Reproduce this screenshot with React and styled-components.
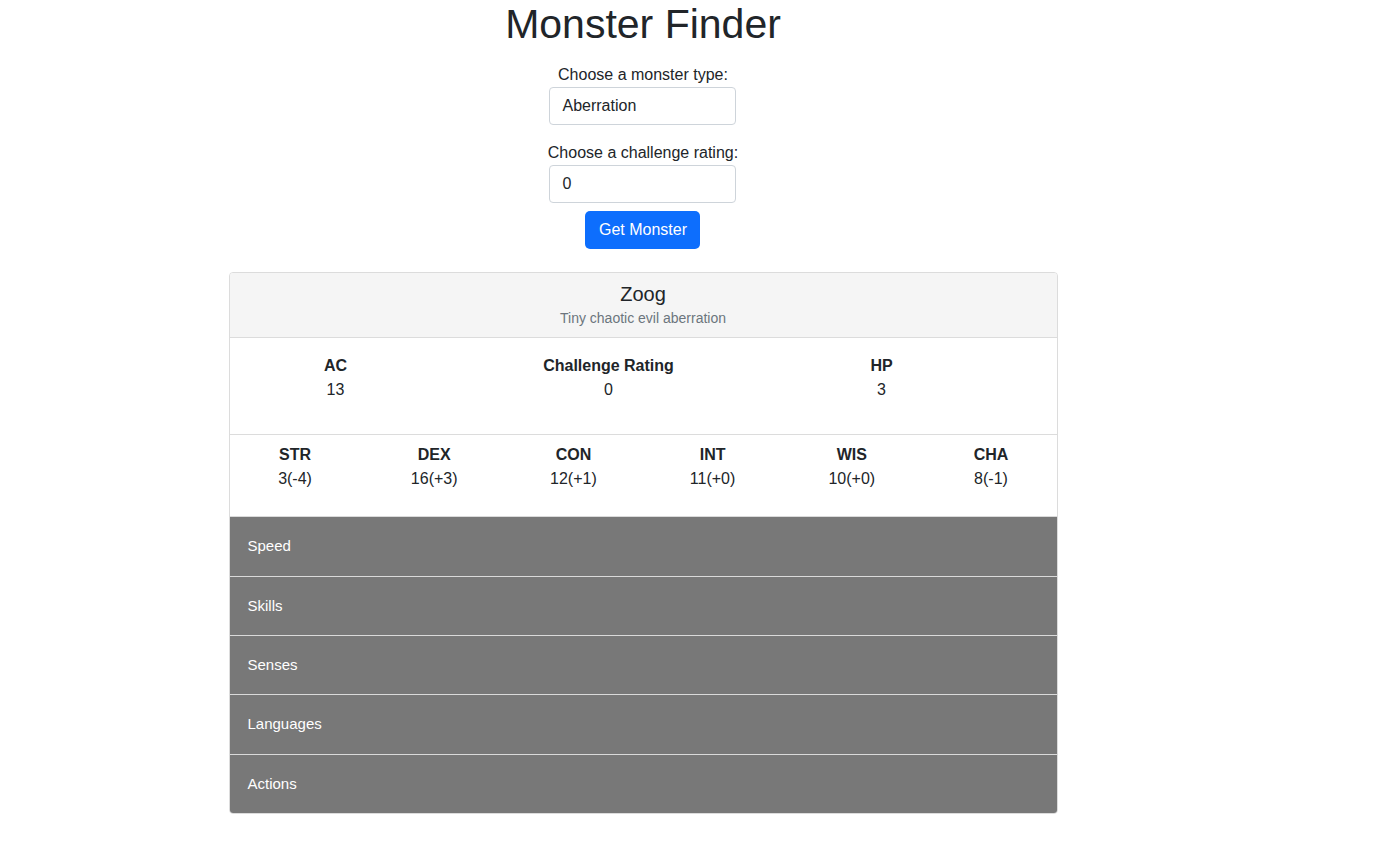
import React from 'react'
import styled, { createGlobalStyle } from 'styled-components'

const Global = createGlobalStyle`
body {
  margin: 0;
  background: #fff;
  color: #212529;
  font-family: "Liberation Sans", Arial, sans-serif;
  font-size: 16px;
  line-height: 1.5;
}
`

const Page = styled.div`
width: 1286px;
display: flex;
flex-direction: column;
align-items: center;
`

const Title = styled.h1`
margin: 0 0 14px;
font-size: 41px;
font-weight: 500;
line-height: 1.2;
color: #212529;
`

const Form = styled.form`
display: flex;
flex-direction: column;
align-items: center;
`

const Label = styled.label`
display: block;
font-size: 16px;
line-height: 24px;
text-align: center;
`

const Field = styled.input`
box-sizing: border-box;
width: 187px;
height: 38px;
margin-bottom: ${p => p.$last ? '8px' : '16px'};
padding: 6px 12px;
border: 1px solid #ced4da;
border-radius: 4px;
font: inherit;
font-size: 16px;
color: #212529;
background: #fff;
outline: none;
`

const Button = styled.button`
box-sizing: border-box;
width: 115px;
height: 38px;
border: none;
border-radius: 5px;
background: #0d6efd;
color: #fff;
font: inherit;
font-size: 16px;
cursor: pointer;
`

const Card = styled.div`
box-sizing: border-box;
width: 829px;
margin-top: 23px;
border: 1px solid #dcdcdc;
border-radius: 4px;
overflow: hidden;
`

const CardHeader = styled.div`
height: 65px;
box-sizing: border-box;
padding-top: 9px;
background: #f5f5f5;
border-bottom: 1px solid #dcdcdc;
text-align: center;
`

const Name = styled.div`
font-size: 20px;
font-weight: 500;
line-height: 24px;
margin-bottom: 2px;
`

const Subtitle = styled.div`
font-size: 14px;
line-height: 21px;
color: #6c757d;
`

const StatRow = styled.div`
display: grid;
grid-template-columns: ${p => p.$cols};
column-gap: ${p => p.$gap || '0px'};
justify-content: ${p => p.$justify || 'start'};
padding: ${p => p.$pad};
border-top: ${p => p.$border ? '1px solid #dcdcdc' : 'none'};
text-align: center;
`

const Stat = styled.div`
display: flex;
flex-direction: column;
`

const StatLabel = styled.div`
font-weight: bold;
font-size: 16px;
line-height: 24px;
`

const StatValue = styled.div`
font-size: 16px;
line-height: 24px;
`

const Section = styled.div`
height: 58.4px;
display: flex;
align-items: center;
padding: 0 18px;
background: #787878;
color: #fff;
font-size: 15px;
border-top: 1px solid #dadada;
`

const abilities = [
  ['STR', '3(-4)'],
  ['DEX', '16(+3)'],
  ['CON', '12(+1)'],
  ['INT', '11(+0)'],
  ['WIS', '10(+0)'],
  ['CHA', '8(-1)'],
]

const sections = ['Speed', 'Skills', 'Senses', 'Languages', 'Actions']

export default function App() {
  return (
    <Page>
      <Global />
      <Title>Monster Finder</Title>
      <Form onSubmit={e => e.preventDefault()}>
        <Label htmlFor="type">Choose a monster type:</Label>
        <Field id="type" readOnly value="Aberration" />
        <Label htmlFor="cr">Choose a challenge rating:</Label>
        <Field id="cr" readOnly value="0" $last />
        <Button type="submit">Get Monster</Button>
      </Form>

      <Card>
        <CardHeader>
          <Name>Zoog</Name>
          <Subtitle>Tiny chaotic evil aberration</Subtitle>
        </CardHeader>
        <StatRow $cols="repeat(3, 200px)" $gap="73px" $pad="16px 0 32px 6px">
          <Stat><StatLabel>AC</StatLabel><StatValue>13</StatValue></Stat>
          <Stat><StatLabel>Challenge Rating</StatLabel><StatValue>0</StatValue></Stat>
          <Stat><StatLabel>HP</StatLabel><StatValue>3</StatValue></Stat>
        </StatRow>
        <StatRow $border $cols="repeat(6, 139.2px)" $justify="center" $pad="8px 0 25px 0">
          {abilities.map(([k, v]) => (
            <Stat key={k}><StatLabel>{k}</StatLabel><StatValue>{v}</StatValue></Stat>
          ))}
        </StatRow>
        {sections.map(s => <Section key={s}>{s}</Section>)}
      </Card>
    </Page>
  )
}
